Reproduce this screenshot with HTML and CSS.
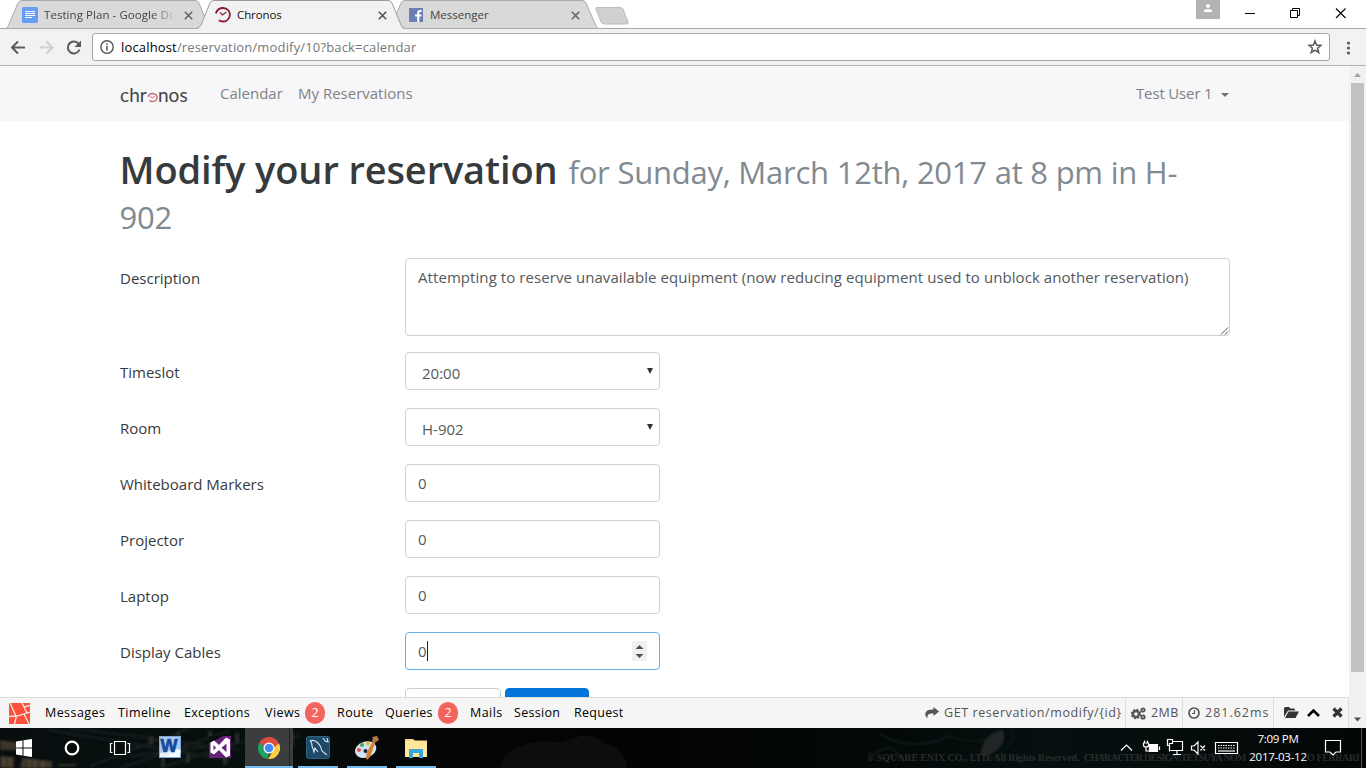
FILE: index.html
```html
<!DOCTYPE html>
<html lang="en">
<head>
<meta charset="utf-8">
<title>Chronos</title>
<link rel="stylesheet" href="styles.css">
</head>
<body>
<div class="screen">
  <header class="tabstrip">
    <svg class="tab-shapes" width="640" height="29" viewBox="0 0 640 29">
      <path d="M5.500 28.500C8 28 8 26 9 24L18 3Q19.500 .5 22 .5H195Q198 .5 199 3L208 26V28.500Z" fill="#d9d9d9" stroke="#aaa"/>
      <path d="M390 28.500L401 3Q402 .5 405 .5H582Q585 .5 586 3L596 26Q597 28 599 28.500Z" fill="#d9d9d9" stroke="#aaa"/>
      <path d="M0 28.500H640" stroke="#a9a9a9"/>
      <path d="M198 29Q200 27 201 25L210 3Q211 .5 214 .5H388Q391 .5 392 3L401 25Q402 28 405 29Z" fill="#f2f2f2"/>
      <path d="M197 28.500Q200 27 201 25L210 3Q211 .5 214 .5H388Q391 .5 392 3L401 25Q402 28 405 28.500" fill="none" stroke="#9a9a9a"/>
      <path d="M597 7.500H620Q622 7.500 623 9L628 22Q629 24 626 24H605Q602 24 601 22L596 9Q595.500 7.500 597 7.500Z" fill="#d0d0d0" stroke="#bdbdbd"/>
    </svg>
    <div class="tab tab-docs">
      <svg width="16" height="16"><rect width="16" height="16" rx="1.500" fill="#669df6"/><path d="M3 4.500h10M3 6.500h10M3 8.500h10M3 10.500h7" stroke="#fff"/></svg>
      <span class="tab-title t-docs">Testing Plan - Google Do</span>
      <svg class="x" width="9" height="9"><path d="M.8.800l7.400 7.400M8.200.800L.8 8.200" stroke="#666" stroke-width="1.600"/></svg>
    </div>
    <div class="tab tab-active">
      <svg width="17" height="16" viewBox="0 0 17 16" fill="none" stroke="#8c1d3b"><path d="M.8 6.500Q2.500 1 8 1Q11.500 1 13.500 3.500Q16 7 14 10.800Q12 14.500 8 14.500Q5.500 14.500 3.800 13.200" stroke-width="1.800"/><path d="M5 5.500L7.500 8L11.500 5" stroke-width="1.100"/></svg>
      <span class="tab-title t-chronos">Chronos</span>
      <svg class="x" width="9" height="9"><path d="M.8.800l7.400 7.400M8.200.800L.8 8.200" stroke="#555" stroke-width="1.600"/></svg>
    </div>
    <div class="tab tab-fb">
      <svg width="14" height="14"><rect width="14" height="14" fill="#6c7fb5"/><path d="M8.200 14V8.600H6V6.500h2.200V5c0-2 1-3 2.800-3h1.600v2h-1.200c-.8 0-1.100.4-1.100 1.100v1.400h2.300l-.3 2.100h-2V14z" fill="#fff"/></svg>
      <span class="tab-title t-fb">Messenger</span>
      <svg class="x" width="9" height="9"><path d="M.8.800l7.400 7.400M8.200.800L.8 8.200" stroke="#666" stroke-width="1.600"/></svg>
    </div>
    <svg class="winctl" width="170" height="28">
      <rect width="24" height="19" fill="#b3b3b3"/><circle cx="12" cy="6" r="2" fill="#fff"/><path d="M8 12V10.500Q8 9 12 9T16 10.500V12Z" fill="#fff"/>
      <path d="M49 13.500h10" stroke="#000"/>
      <path d="M94.500 10.500h7v7h-7zM96.500 10.500v-2h7v7h-2" fill="none" stroke="#000"/>
      <path d="M140 8.500l9.500 9.500M149.500 8.500L140 18" stroke="#000" stroke-width="1.100"/>
    </svg>
  </header>

  <div class="toolbar">
    <svg class="nav-icons" width="92" height="37" fill="none">
      <path d="M25 18.500H12.500M18 12.500l-6 6 6 6" stroke="#5a5a5a" stroke-width="2"/>
      <path d="M39.500 18.500H52M46.500 12.500l6 6-6 6" stroke="#cfcfcf" stroke-width="2"/>
      <path d="M78.700 15A6 6 0 1 0 79.500 20.500" stroke="#5a5a5a" stroke-width="2"/><path d="M81 11.500v6.500h-6.500z" fill="#5a5a5a"/>
    </svg>
    <div class="omnibox">
      <svg width="14" height="14" fill="none" stroke="#555"><circle cx="7" cy="7" r="6.200" stroke-width="1.400"/><path d="M7 6v4.500M7 3.300v1.500" stroke-width="1.600"/></svg>
      <span class="url"><b>localhost</b>/reservation/modify/10?back=calendar</span>
      <svg class="star" width="16" height="16" fill="none" stroke="#5a5a5a" stroke-width="1.500"><path d="M8 2l1.600 4.100 4.300.3-3.300 2.800 1.100 4.300L8 11.100l-3.700 2.400 1.100-4.300L2.100 6.400l4.300-.3z"/></svg>
    </div>
    <svg class="dots" width="36" height="37" fill="#5a5a5a"><circle cx="18.500" cy="14" r="1.600"/><circle cx="18.500" cy="19" r="1.600"/><circle cx="18.500" cy="24" r="1.600"/></svg>
  </div>

  <div class="viewport">
    <div class="page">
      <nav class="navbar">
        <div class="brand"><span class="b1">chr</span><svg width="11" height="11" fill="none" stroke="#c96b80"><path d="M1 5Q2 1.500 5.500 1.500Q10 2 10 5.500Q9.500 9.500 5.500 9.500Q3.500 9.500 2.500 8.500" stroke-width="1.400"/><path d="M3 4.500l2.500 1.500L8 4"/></svg><span class="b2">nos</span></div>
        <span class="navlink n-cal">Calendar</span>
        <span class="navlink n-res">My Reservations</span>
        <span class="navlink n-user">Test User 1</span>
        <i class="caret"></i>
      </nav>
      <main class="container">
        <h1><span class="h-main">Modify your reservation</span><small>for Sunday, March 12th, 2017 at 8 pm in H-<br>902</small></h1>
        <form class="form">
          <div class="row row-desc"><label class="l-desc">Description</label><div class="area">Attempting to reserve unavailable equipment (now reducing equipment used to unblock another reservation)<svg width="9" height="9"><path d="M1 8.500L8 1.500M5 8.500L8 5.500" stroke="#555"/></svg></div></div>
          <div class="row"><label class="l-time">Timeslot</label><div class="field select"><span>20:00</span><i></i></div></div>
          <div class="row"><label class="l-room">Room</label><div class="field select"><span>H-902</span><i></i></div></div>
          <div class="row"><label class="l-mark">Whiteboard Markers</label><div class="field">0</div></div>
          <div class="row"><label class="l-proj">Projector</label><div class="field">0</div></div>
          <div class="row"><label class="l-lap">Laptop</label><div class="field">0</div></div>
          <div class="row"><label class="l-disp">Display Cables</label><div class="field focus">0<i class="cursor"></i><svg width="15" height="20"><rect width="15" height="20" fill="#f0f0f0"/><path d="M3.500 8L7.500 4 11.500 8zM3.500 13h8l-4 4z" fill="#505050"/></svg></div></div>
          <div class="buttons"><div class="btn"></div><div class="btn primary"></div></div>
        </form>
      </main>
      <footer class="debugbar">
        <svg class="laravel" width="21" height="21"><rect width="21" height="21" fill="#fb503b"/><path d="M1 0l6 13M0 13.500l8-.5 13-4M13 0l2 4 6-1.500M15 4l3 6M7.500 13l-2 8M15 11l5 10" fill="none" stroke="#fde4e0" stroke-width="1.300"/></svg>
        <span class="d-mes">Messages</span><span class="d-tim">Timeline</span><span class="d-exc">Exceptions</span><span class="d-vie">Views</span><b class="badge">2</b><span class="d-rou">Route</span><span class="d-que">Queries</span><b class="badge">2</b><span class="d-mai">Mails</span><span class="d-ses">Session</span><span class="d-req">Request</span>
        <div class="stats">
          <div class="stat s-get"><svg width="14" height="12"><path d="M8.500 0L14 4.500 8.500 9V6.500C4 6.300 2 7.500 2.500 11.500 .5 9.500 0 8 .5 6 1.500 3 4.500 2.500 8.500 2.500z" fill="#555"/></svg><span>GET reservation/modify/{id}</span></div>
          <div class="stat s-mb"><svg width="15" height="13" fill="none" stroke="#555"><circle cx="5" cy="7" r="3" stroke-width="2.400"/><circle cx="5" cy="7" r="4.500" stroke-width="1.400" stroke-dasharray="2 1.530"/><circle cx="12" cy="3" r="1.700" stroke-width="1.800"/><circle cx="12" cy="10" r="1.700" stroke-width="1.800"/></svg><span>2MB</span></div>
          <div class="stat s-ms"><svg width="12" height="12" fill="none" stroke="#555"><circle cx="6" cy="6" r="5" stroke-width="1.700"/><path d="M6.500 3v3.500H4" stroke-width="1.200"/></svg><span>281.62ms</span></div>
          <div class="stat s-ctl"><svg width="60" height="14"><path d="M1 11V2.500Q1 1 2.500 1H6l1.500 1.500H11Q12 2.500 12 4V4.500H5Z M2 12L5.500 5.500H16L12.500 12Z" fill="#333"/><path d="M25 10l5.500-5.500L36 10" fill="none" stroke="#000" stroke-width="2.600"/><path d="M50.500 2.500l8 8M58.500 2.500l-8 8" stroke="#333" stroke-width="3.200"/></svg></div>
        </div>
      </footer>
    </div>
    <div class="scrollbar"><svg width="17" height="17"><path d="M5 11h7L8.500 7z" fill="#a3a3a3"/></svg><div class="thumb"></div><svg class="down" width="17" height="17"><path d="M5 6.500h7l-3.500 4z" fill="#505050"/></svg></div>
  </div>

  <div class="taskbar">
    <svg class="scene" width="1366" height="40">
      <defs><filter id="soft"><feGaussianBlur stdDeviation="1.200"/></filter></defs>
      <g filter="url(#soft)">
        <path d="M0 12l20 3v7H0zM0 28l14 1v11H0zM22 30l30 3v7H20z" fill="#3b3429"/>
        <path d="M26 32h4v8M35 31v9M43 33v7M4 29v9M10 29v9M58 37h18" fill="none" stroke="#6b5a3b"/>
        <path d="M48 2L230 32M70 0L240 22M90 38L190 0M120 40L230 3M160 40L240 14M130 28L300 8" stroke="#131b1a" stroke-width="3"/>
        <path d="M151 8v8M163 28v10M178 5v8M188 26v9M210 3v7M225 27v10M237 5v9M254 3v8M292 4v14" stroke="#262c2a" stroke-width="4"/>
        <path d="M500 40Q510 10 560 15Q590 0 605 15Q625 20 628 40Z" fill="#08090a"/>
        <path d="M500 40Q510 10 560 15Q600 0 628 38" fill="none" stroke="#121315"/>
        <path d="M880 6Q910 25 950 8Q975 20 1000 5M870 30Q890 10 900 30" fill="none" stroke="#0a1514" stroke-width="3"/>
        <path d="M980 27Q984 4 1003 2Q1008 16 990 27Z" fill="#232626"/><path d="M1013 3Q1013 25 985 32" fill="none" stroke="#1a2425"/>
      </g>
    </svg>
    <svg class="launcher" width="440" height="40">
      <path d="M16 13.500l6.500-1v7H16zM23.500 12.300L32 11v8.500h-8.500zM16 20.500h6.500v7L16 26.500zM23.500 20.500H32V29l-8.500-1.300z" fill="#fff"/>
      <circle cx="72" cy="20" r="6.300" fill="none" stroke="#fff" stroke-width="2.200"/>
      <path d="M114.500 13.500h11v13h-11zM112.500 15.500h-2v9h2M127.500 15.500h2v9h-2" fill="none" stroke="#fff" stroke-width="1.200"/>
      <rect x="159.500" y="8.500" width="21" height="21" fill="#e4effa" stroke="#7fa6d4"/><path d="M160 9h20v12l-20 4z" fill="#a9caed"/><text x="160.500" y="24" font-family="Liberation Sans" font-weight="bold" font-size="18" fill="#164a9b" stroke="#164a9b" stroke-width=".7" textLength="17" lengthAdjust="spacingAndGlyphs">W</text><path d="M164 29q5-3 11-4l1-4 5 2-2 6z" fill="#f5faff"/>
      <path d="M209 8h22v22h-22z" fill="#68217a"/><path d="M209 8h14l-9 5-5 2z" fill="#080d0e"/><path d="M210.500 14.500l3.500-2 5 4.500 7-7.500 4 2v16l-4 2-7-7.500-5 4.500-3.500-2zM213.500 17v5.500l2.500-2.700zM226.500 15.500l-5 4.300 5 4.200z" fill="#fff" fill-rule="evenodd"/>
      <rect x="245" width="48" height="40" fill="#3b3d3e"/><path d="M289.500 0v38" stroke="#222"/>
      <path d="M269 20L259.500 14.500A11 11 0 0 1 278.500 14.500Z" fill="#dd4b3e"/><path d="M269 20L268 31A11 11 0 0 1 259.500 14.500Z" fill="#1da462"/><path d="M269 20L278.800 15A11 11 0 0 1 268 31L273.500 22Z" fill="#ffce44"/><path d="M268 15h10.800L273 21zM259.500 14.500L264 22l5-7z" fill="#dd4b3e"/><path d="M259.500 14.500L264.500 23l3 2-2-6z" fill="#1da462"/><circle cx="269" cy="20" r="5.500" fill="#fff"/><circle cx="269" cy="20" r="4.300" fill="#4587f4"/>
      <rect x="306.500" y="8.500" width="23" height="22" rx="2" fill="#1d4a66" stroke="#2c6485"/><path d="M310 13q4-2 8 2 3 3 4 8l5 4M310 13q2 1 2 5l2 6 1-4 3 4M323 10l2 3 3 1-1-4" fill="none" stroke="#d5e5ee" stroke-width="1.100"/>
      <ellipse cx="365.500" cy="21.500" rx="11" ry="8" transform="rotate(-18 366 21)" fill="#cfe5f3"/><circle cx="359" cy="22" r="2" fill="#e05341"/><circle cx="362" cy="17" r="2" fill="#4ba551"/><circle cx="368" cy="15.500" r="2" fill="#efb731"/><circle cx="365.500" cy="23" r="2" fill="#172438"/><path d="M366.500 32q-1-6 2-11l4.500-8 2.500 1-4 11q-1 5-5 7z" fill="#d58133"/><path d="M372 13l1-3-1-1 5-1 2 4-3 2z" fill="#b07a49"/>
      <path d="M405 11h8l2 1.500h12V29h-22z" fill="#f1d77c"/><path d="M405 13h22v16h-22z" fill="#ffe69a"/><path d="M409 21h14v9h-4v-5h-6v5h-4z" fill="#35a7dd"/>
      <path d="M245 39h48M298 39h40M347 39h40M396 39h40" stroke="#76b9ed" stroke-width="2"/>
    </svg>
    <div class="credit"><span class="cr-a">© SQUARE ENIX CO., LTD. All Rights Reserved.</span><span class="cr-b">CHARACTER DESIGN:TETSUYA NOM</span><span class="cr-c">O FERRARI</span></div>
    <div class="tray">
      <svg width="126" height="40" fill="none" stroke="#fff" stroke-width="1.200">
        <path d="M5 22.500l5.500-5.500 5.500 5.500"/>
        <path d="M33.500 16.500h8v7h-8zM43.500 18.500v3.500"/><path d="M33.500 17h7.500v6h-7.500z" fill="#fff"/><path d="M27.500 15h5v2q0 2-2.500 2t-2.500-2zM28.500 12.500v2.500M31.500 12.500v2.500M30 19v4h3"/>
        <path d="M54 17.500h-2.500v-6h5v4h-3v8M56.500 13.500h10v9h-12M61 23v3M57 26.500h8"/>
        <path d="M75.500 18h2.500l4-4v12l-4-4h-2.500zM84.500 17.500l4.500 5M89 17.500l-4.500 5"/>
        <path d="M99.500 14.500h22v11h-22z"/><path d="M102 17.500h17M102 20h17" stroke-dasharray="1.500 1"/><path d="M102 23h17"/>
      </svg>
      <div class="clock"><span class="c-time">7:09 PM</span><span class="c-date">2017-03-12</span></div>
      <svg class="notif" width="50" height="40"><path d="M9.500 12.500h15v11.500h-4.500l-3 3-3-3h-4.500z" fill="none" stroke="#fff" stroke-width="1.200"/><path d="M45.500 0v40" stroke="#555"/></svg>
    </div>
  </div>
</div>
</body>
</html>
```
FILE: styles.css
```css
* { box-sizing: border-box; }
body { margin: 0; overflow: hidden; font-family: "Open Sans", "Noto Sans", sans-serif; }
svg { display: block; flex: none; }
span, label { white-space: nowrap; flex: none; }
.screen { width: 1366px; height: 768px; display: flex; flex-direction: column; background: #fff; }

/* browser chrome */
.tabstrip { position: relative; height: 29px; display: flex; border-bottom: 1px solid #a9a9a9; flex: none; }
.tab-shapes { position: absolute; left: 0; top: 0; }
.tab { position: relative; display: flex; align-items: center; height: 30px; }
.tab-docs { width: 171px; margin-left: 22px; }
.tab-active { width: 172px; margin-left: 22px; }
.tab-fb { width: 171px; margin-left: 22px; }
.tab-title { font-size: 11.5px; color: #444; margin-left: 6px; line-height: 16px; letter-spacing: -.09px; }
.t-docs { width: 132px; letter-spacing: .06px; overflow: hidden; -webkit-mask-image: linear-gradient(90deg, #000 82%, transparent); mask-image: linear-gradient(90deg, #000 82%, transparent); }
.tab-active .tab-title { color: #111; margin-left: 5px; }
.tab-fb .t-fb { margin-left: 7px; letter-spacing: 0; }
.x { margin-left: auto; }
.winctl { margin-left: auto; }
.toolbar { height: 37px; background: #f2f2f2; border-bottom: 1px solid #b3b3b3; display: flex; align-items: center; flex: none; }
.omnibox { width: 1238px; height: 28px; border: 1px solid #a6a6a6; border-radius: 3px; background: #fff; display: flex; align-items: center; padding: 0 6px 0 7px; }
.url { font-size: 13px; letter-spacing: .16px; color: #777; margin-left: 7px; }
.url b { font-weight: 400; color: #000; }
.star { margin-left: auto; }

/* page */
.viewport { display: flex; height: 662px; flex: none; }
.page { width: 1349px; display: flex; flex-direction: column; }
.navbar { height: 55px; background: #f7f7f9; display: flex; align-items: center; padding: 0 119px 0 120px; flex: none; color: #818183; }
.brand { display: flex; align-items: center; width: 68px; margin: 2px 32px 0 0; font-family: Lato, sans-serif; font-size: 19px; line-height: 20px; color: #444; letter-spacing: .1px; }
.brand svg { margin: 5px 0 0; }
.navlink { font-size: 15px; line-height: 22px; margin-bottom: 2px; }
.n-cal { width: 78px; }
.n-user { margin-left: auto; width: 86px; letter-spacing: -.15px; }
.caret { border: 4px solid transparent; border-top-color: #707070; border-bottom: 0; margin: 3px 1px 0 -1px; }
.container { padding: 26px 119px 0 119.5px; flex: 1; min-height: 0; overflow: hidden; }
h1 { margin: 0 0 23px; font-size: 38px; line-height: 44px; font-weight: 600; color: #373a3c; height: 88px; letter-spacing: -.12px; white-space: nowrap; }
h1 small { font-size: 31px; line-height: 40px; font-weight: 400; color: #818a91; letter-spacing: -.23px; }
.h-main { margin-right: 11px; }
.form { padding-left: .5px; }
.row { display: flex; height: 38px; margin-bottom: 18px; font-size: 15px; color: #373a3c; }
.row-desc { height: 78px; margin-bottom: 16px; }
.row label { width: 285px; padding-top: 9px; line-height: 22px; }
.field, .area { border: 1px solid #d0d0d0; border-radius: 4px; background: #fff; color: #55595c; padding: 7px 12px; line-height: 22px; }
.field { width: 255px; display: flex; }
.area { width: 825px; position: relative; white-space: nowrap; letter-spacing: .07px; }
.area svg { position: absolute; right: 0; bottom: 0; }
.select { padding: 9px 6px 7px 16px; }
.select i { margin: 6px 0 0 auto; border: 3px solid transparent; border-top: 6px solid #333; border-bottom: 0; height: 6px; }
.focus { border-color: #66afe9; }
.cursor { width: 1px; height: 20px; background: #222; margin-top: 1px; }
.focus svg { margin: 1px 0 0 auto; }
.buttons { display: flex; gap: 4px; }
.btn { width: 96px; height: 38px; border: 1px solid #ccc; border-radius: 4px; }
.row + .buttons { margin-left: 285px; }
.primary { width: 84px; background: #0275d8; border-color: #0275d8; }

/* debug bar */
.debugbar { height: 31px; border-top: 1px solid #ddd; background: #f5f5f5; display: flex; align-items: center; padding-left: 9px; font-size: 12.5px; color: #000; flex: none; letter-spacing: .43px; }
.debugbar span { margin-bottom: 2px; }
.laravel { margin-right: 15px; }
.d-mes { width: 73px; } .d-tim { width: 66px; } .d-exc { width: 81px; } .d-vie { width: 40px; }
.d-rou { width: 48px; } .d-que { width: 53px; } .d-mai { width: 44px; } .d-ses { width: 60px; }
.d-exc, .d-ses, .d-req, .d-que { letter-spacing: .3px; }
.badge { width: 20px; height: 22px; border-radius: 10px; background: #f4645f; color: #fff; font-weight: 400; line-height: 21px; text-align: center; margin-right: 12px; letter-spacing: 0; }
.stats { display: flex; margin-left: auto; height: 30px; color: #555; }
.stat { display: flex; align-items: center; border-right: 1px solid #ddd; padding-left: 5px; }
.stat span { margin-left: 5px; }
.s-get { width: 206px; letter-spacing: .58px; } .s-mb { width: 57px; } .s-ms { width: 91px; letter-spacing: 1px; }
.s-ctl { width: 75px; padding-left: 9px; }

.scrollbar { width: 17px; background: #f1f1f1; display: flex; flex-direction: column; }
.thumb { width: 13px; height: 589px; margin-left: 2px; background: #c1c1c1; }
.down { margin-top: auto; }

/* taskbar */
.taskbar { position: relative; height: 40px; background: linear-gradient(90deg, #080e0f 0, #07100e 280px, #050606 400px, #030304 650px, #030808 860px, #061010 1050px, #030606); display: flex; color: #fff; flex: none; }
.scene { position: absolute; left: 0; top: 0; }
.launcher { position: relative; }
.credit { position: absolute; left: 867px; top: 22px; width: 492px; display: flex; font: bold 10px/15px "Liberation Serif", serif; color: #292c2c; white-space: nowrap; }
.cr-a { width: 217px; letter-spacing: -.08px; }
.cr-b { width: 223px; letter-spacing: -.7px; }
.cr-c { letter-spacing: -.4px; }
.tray { position: relative; margin-left: auto; display: flex; }
.clock { width: 72px; display: flex; flex-direction: column; align-items: center; font-size: 11.5px; line-height: 18px; padding-top: 2px; letter-spacing: -.25px; margin-right: 2px; }
```
